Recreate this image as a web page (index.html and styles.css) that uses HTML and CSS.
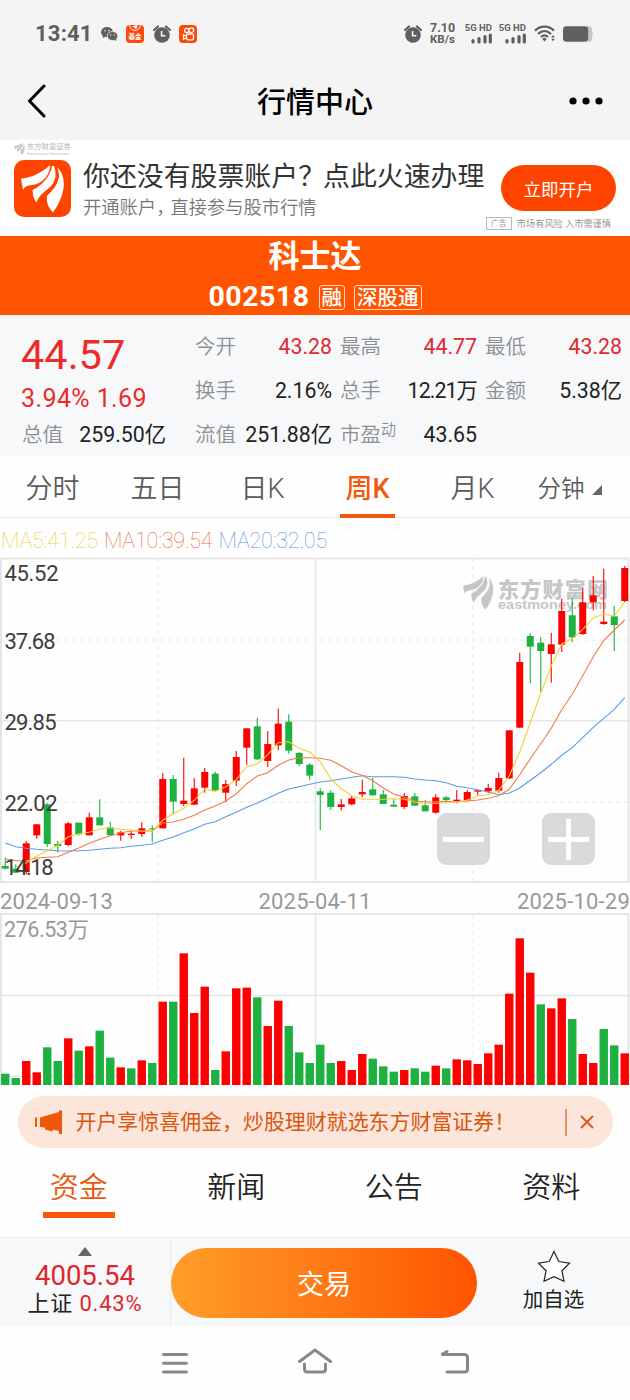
FILE: index.html
```
<!DOCTYPE html>
<html lang="zh-CN">
<head>
  <meta charset="UTF-8">
  <title>行情中心</title>
  <link rel="stylesheet" href="styles.css">
</head>
<body>

  <svg class="defs">
    <symbol id="logo" viewBox="0 0 44 48">
      <path d="M0 13.500C8 13 20 9 29 0C29.500 9 22 19 11 20C6 20.500 3 22 2 25Z"/>
      <path d="M31 1C30 10 22 20 11.500 25C12 31 13 35 15.500 37.500C17 32 22 28 28 23C35 17 36 9 33 1Z"/>
      <path d="M36 2C43 9 44 18 42 26C40 35 36 42 32 47.500C28 43 25 38 26 31C30 27 37 20 38 12C38 8 37.500 5 36 2Z"/>
    </symbol>
    <symbol id="alarm" viewBox="0 0 18 18">
      <circle cx="9" cy="10" r="7.8"/>
      <path d="M1 5L5 1.5M17 5L13 1.5" stroke="#5f5f5f" stroke-width="2.2" stroke-linecap="round"/>
      <path d="M8.6 6V10.8H12.4" fill="none" stroke="#f4f4f4" stroke-width="1.6"/>
    </symbol>
    <symbol id="signal" viewBox="0 0 21 11">
      <path d="M2 7.6V9M8 5.5V9M14 3.5V9M19.3 2V9" stroke="#5f5f5f" stroke-width="3.2" stroke-linecap="round"/>
    </symbol>
  </svg>

  <div class="status-bar">
    <div class="status-left">
      <span class="clock">13:41</span>
      <svg class="wechat" viewBox="0 0 17 14">
        <ellipse cx="6" cy="5.2" rx="6" ry="5.1"/>
        <path d="M2 8L1.6 11L5 9.6Z"/>
        <ellipse cx="11.5" cy="9" rx="5.3" ry="4.5" stroke="#f4f4f4" stroke-width=".8"/>
        <path d="M13 12.8L15.2 14L15 11.6Z"/>
        <g fill="#f4f4f4"><circle cx="4" cy="3.8" r=".8"/><circle cx="8" cy="3.8" r=".8"/><circle cx="9.8" cy="8" r=".7"/><circle cx="13.2" cy="8" r=".7"/></g>
      </svg>
      <span class="app-icon fund">
        <svg viewBox="0 0 12 6"><path d="M.6 0A5.4 5.4 0 0 0 11.4 0" fill="none" stroke="#fff" stroke-width=".9"/><path d="M3 1.6L8 0L8.5 1L7 4.5L5.5 2.5Z" fill="#fff"/></svg>
        <i>基金</i>
      </span>
      <svg class="alarm"><use href="#alarm"/></svg>
      <span class="app-icon kuai">
        <svg viewBox="0 0 12 14" fill="none" stroke="#fff" stroke-width="1.3">
          <circle cx="4.2" cy="3.5" r="2.1"/><circle cx="8.8" cy="3.2" r="2.4"/>
          <rect x="4" y="7" width="7" height="5.8" rx="1.6"/><path d="M3.8 9L1 7.8V12L3.8 10.8"/>
        </svg>
      </span>
    </div>
    <div class="status-right">
      <svg class="alarm"><use href="#alarm"/></svg>
      <div class="speed"><b>7.10</b><b>KB/s</b></div>
      <div class="sim"><b>5G HD</b><svg><use href="#signal"/></svg></div>
      <div class="sim"><b>5G HD</b><svg><use href="#signal"/></svg></div>
      <svg class="wifi" viewBox="0 0 22 17">
        <g fill="none" stroke="#5f5f5f" stroke-width="2.3">
          <path d="M1 5.6C6.5 .3 14.500 .3 20 5.600"/><path d="M4 9C8 5.200 13 5.200 17 9"/><path d="M7 12C9.200 10 11.800 10 14 12"/>
        </g>
        <path d="M8.300 14L10.500 16.500L12.700 14A3 3 0 0 0 8.300 14Z"/>
        <path d="M17.200 12.500L19 10L20.800 12.500ZM17.200 13.700L19 16.200L20.800 13.700Z"/>
      </svg>
      <svg class="battery" viewBox="0 0 32 16">
        <path d="M24 0H27Q30 0 30 4V12Q30 16 27 16H24Z" fill="#c4c4c4"/>
        <path d="M30 5Q31.500 8 30 11Z" fill="#c4c4c4"/>
        <rect width="26" height="16" rx="3.500"/>
      </svg>
    </div>
  </div>

  <div class="nav-bar">
    <svg class="back" viewBox="0 0 20 34"><path d="M17 2L2.500 17L17 32" fill="none" stroke="#000" stroke-width="3" stroke-linecap="round" stroke-linejoin="round"/></svg>
    <h1>行情中心</h1>
    <svg class="more" viewBox="0 0 34 8"><circle cx="4" cy="4" r="3.600"/><circle cx="17" cy="4" r="3.600"/><circle cx="30" cy="4" r="3.600"/></svg>
  </div>

  <div class="ad">
    <div class="ad-brand">
      <svg><use href="#logo"/></svg>
      <div><span class="brand-cn">东方财富证券</span><span class="brand-en">Eastmoney Securities</span></div>
    </div>
    <div class="ad-body">
      <div class="ad-logo"><svg><use href="#logo"/></svg></div>
      <div class="ad-text">
        <h2>你还没有股票账户<span class="mark">？</span>点此火速办理</h2>
        <p>开通账户<span class="comma">，</span>直接参与股市行情</p>
      </div>
      <div class="ad-side">
        <button class="open-btn">立即开户</button>
        <div class="ad-note"><span class="ad-tag">广告</span>市场有风险 入市需谨慎</div>
      </div>
    </div>
  </div>

  <div class="stock-head">
    <h2>科士达</h2>
    <div class="stock-code"><span class="code">002518</span><span class="tag">融</span><span class="tag">深股通</span></div>
  </div>

  <div class="quote">
    <div class="price-box">
      <div class="price">44.57</div>
      <div class="change">3.94% 1.69</div>
    </div>
    <div class="item"><span>今开</span><b class="up">43.28</b></div>
    <div class="item"><span>最高</span><b class="up">44.77</b></div>
    <div class="item"><span>最低</span><b class="up">43.28</b></div>
    <div class="item"><span>换手</span><b>2.16%</b></div>
    <div class="item"><span>总手</span><b class="tight">12.21万</b></div>
    <div class="item"><span>金额</span><b>5.38亿</b></div>
    <div class="item"><span>总值</span><b>259.50亿</b></div>
    <div class="item"><span>流值</span><b>251.88亿</b></div>
    <div class="item"><span>市盈<sup>动</sup></span><b>43.65</b></div>
  </div>

  <div class="k-tabs">
    <div class="k-tab">分时</div>
    <div class="k-tab">五日</div>
    <div class="k-tab">日K</div>
    <div class="k-tab active">周K</div>
    <div class="k-tab">月K</div>
    <div class="k-tab minute">分钟<i class="corner"></i></div>
  </div>

  <div class="ma-row">
    <span class="ma5">MA5:41.25</span>
    <span class="ma10">MA10:39.54</span>
    <span class="ma20">MA20:32.05</span>
  </div>

  <div class="chart">
    <svg id="kline" width="630" height="330">
      <g class="grid">
        <path class="dash" d="M0 84H630M0 246H630M158 2V326M473 2V326"/>
        <path class="solid" d="M0 164.700H630M315.500 2V326"/>
        <rect x="1" y="2.500" width="627.500" height="323.500"/>
      </g>
      <g class="watermark">
        <use href="#logo" x="463" y="20" width="31" height="34"/>
        <text class="wm-cn" x="498" y="40.500" textLength="110">东方财富网</text>
        <text class="wm-en" x="498" y="53" textLength="109" lengthAdjust="spacingAndGlyphs">eastmoney.com</text>
      </g>
    </svg>
    <div class="zoom-btns">
      <button class="zoom minus"></button>
      <button class="zoom plus"></button>
    </div>
  </div>

  <div class="dates"><span>2024-09-13</span><span>2025-04-11</span><span>2025-10-29</span></div>

  <svg id="volume" width="630" height="172">
    <g class="grid">
      <path class="dash" d="M158 2V172M473 2V172"/>
      <path class="solid" d="M0 82.500H630M0 163.300H630M315.500 2V172"/>
      <path class="frame" d="M1 172V1H628.500V172"/>
    </g>
    <text class="vol-label" x="4" y="24" textLength="85">276.53万</text>
  </svg>

  <div class="notice">
    <svg class="horn" viewBox="0 0 27 24"><path d="M0 7.500H2V17H0ZM5 7.500L24 2V.500H27V24H24V21L18 19.500L17 21.500L10 19.500V17.500L5 17Z"/></svg>
    <span class="notice-text">开户享惊喜佣金，炒股理财就选东方财富证券！</span>
    <i class="bar"></i>
    <svg class="close" viewBox="0 0 14 14"><path d="M1 1L13 13M13 1L1 13" stroke="#e0591b" stroke-width="2"/></svg>
  </div>

  <div class="info-tabs">
    <div class="info-tab active">资金</div>
    <div class="info-tab">新闻</div>
    <div class="info-tab">公告</div>
    <div class="info-tab">资料</div>
  </div>

  <div class="bottom-bar">
    <div class="index-box">
      <i class="arrow-up"></i>
      <div class="index-value">4005.54</div>
      <div class="index-name">上证 <span>0.43%</span></div>
    </div>
    <button class="trade-btn">交易</button>
    <div class="fav">
      <svg viewBox="0 0 34 33"><path d="M17 1.500L21.800 11.500L32.500 13.200L24.900 20.700L27 31.300L17 26.600L7 31.300L9.100 20.700L1.500 13.200L12.200 11.500Z" fill="#fff" stroke="#222" stroke-width="1.200"/></svg>
      <span>加自选</span>
    </div>
  </div>

  <div class="sys-nav">
    <svg viewBox="0 0 34 28"><path d="M5.500 6.500H28.500M5.500 15.300H28.500M5.500 24H28.500"/></svg>
    <svg viewBox="0 0 34 28"><path d="M1.500 13.500L17 2L32.500 13.500M6.500 16V21Q6.500 24 9.500 24H24.500Q27.500 24 27.500 21V16"/></svg>
    <svg viewBox="0 0 34 28"><path d="M9 3.500L3.500 6.500H26.500Q29.500 6.500 29.500 9.500V21Q29.500 24 26.500 24H9"/></svg>
  </div>

  <script src="chart.js"></script>
</body>
</html>
```

FILE: styles.css
```
* {
  box-sizing: border-box;
}

body {
  margin: 0;
  width: 630px;
  height: 1400px;
  overflow: hidden;
  background: #fefefe;
  font-family: Roboto, "Noto Sans CJK SC", sans-serif;
  color: #222;
}

h1, h2, p {
  margin: 0;
}

button {
  border: none;
  padding: 0;
  font-family: inherit;
}

svg {
  display: block;
}

i {
  font-style: normal;
}

.defs {
  width: 0;
  height: 0;
  position: absolute;
}

/* status bar */
.status-bar {
  height: 67px;
  padding: 0 36px 0 35px;
  background: #f4f4f4;
  display: flex;
  justify-content: space-between;
  align-items: center;
  fill: #5f5f5f;
  color: #5f5f5f;
}

.status-left, .status-right {
  display: flex;
  align-items: center;
}

.clock {
  font-size: 22px;
  font-weight: 700;
  letter-spacing: 0.2px;
  width: 66px;
  line-height: 24px;
}

.wechat {
  width: 17px;
  height: 14px;
}

.app-icon {
  width: 18px;
  height: 18px;
  border-radius: 4px;
  background: #fb4a0b;
  display: flex;
  flex-direction: column;
  align-items: center;
  justify-content: center;
}

.fund {
  margin: 0 9px 0 8px;
  justify-content: flex-start;
}

.fund svg {
  width: 12px;
  height: 6px;
}

.fund i {
  font-size: 6.5px;
  line-height: 12px;
  font-weight: 700;
  color: #fff;
}

.kuai {
  margin-left: 8px;
}

.kuai svg {
  width: 13px;
  height: 14px;
}

.alarm {
  width: 18px;
  height: 18px;
}

.speed {
  margin: 0 9px 0 8px;
  width: 25px;
  display: flex;
  flex-direction: column;
  font-size: 11.5px;
  line-height: 12px;
}

.speed b:first-child {
  font-size: 12.5px;
  line-height: 11px;
}

.sim {
  width: 28px;
  margin-right: 6px;
  display: flex;
  flex-direction: column;
  align-items: flex-end;
  font-size: 9.5px;
  line-height: 10px;
  white-space: nowrap;
}

.sim svg {
  width: 21px;
  height: 11px;
}

.wifi {
  width: 22px;
  height: 17px;
  margin: 0 7px 0 2px;
}

.battery {
  width: 31px;
  height: 16px;
}

/* title bar */
.nav-bar {
  height: 73px;
  padding: 0 27px 5px;
  background: #f4f4f4;
  display: flex;
  justify-content: space-between;
  align-items: center;
}

.back {
  width: 20px;
  height: 34px;
}

.nav-bar h1 {
  font-size: 29px;
  line-height: 40px;
  font-weight: 500;
  color: #000;
  padding: 3px 0 0 14px;
}

.more {
  width: 34px;
  height: 8px;
}

/* ad banner */
.ad {
  height: 96px;
  background: #fff;
  padding: 3px 14px 0;
}

.ad-brand {
  display: flex;
  height: 13px;
  gap: 2px;
  color: #c4c4c4;
  fill: #c4c4c4;
}

.ad-brand svg {
  width: 11px;
  height: 12px;
}

.ad-brand span {
  display: block;
  white-space: nowrap;
}

.brand-cn {
  font-size: 7.3px;
  line-height: 8px;
  font-weight: 500;
}

.brand-en {
  font-size: 4.4px;
  line-height: 5px;
}

.ad-body {
  display: flex;
}

.ad-logo {
  width: 57px;
  height: 57px;
  margin-top: 4px;
  border-radius: 10px;
  background: #ff4400;
  display: flex;
  align-items: center;
  justify-content: center;
  fill: #fff;
}

.ad-logo svg {
  width: 44px;
  height: 48px;
}

.ad-text {
  margin-left: 12px;
  width: 403px;
}

.ad-text h2 {
  font-size: 26.9px;
  line-height: 38px;
  font-weight: 400;
  color: #333;
  white-space: nowrap;
  margin-top: 2px;
}

.mark {
  letter-spacing: -2px;
}

.ad-text p {
  font-size: 18.3px;
  line-height: 23px;
  color: #777;
  font-weight: 350;
}

.comma {
  letter-spacing: -4px;
}

.ad-side {
  margin-left: -1px;
  padding-top: 9px;
  display: flex;
  flex-direction: column;
  align-items: flex-end;
  width: 131px;
}

.open-btn {
  width: 115px;
  height: 46px;
  border-radius: 23px;
  background: #ff4400;
  color: #fff;
  font-size: 17.5px;
}

.ad-note {
  display: flex;
  align-items: center;
  margin: 5px 5px 0 0;
  font-size: 9.2px;
  line-height: 15px;
  color: #999;
  white-space: nowrap;
}

.ad-tag {
  width: 26px;
  height: 13px;
  margin-right: 5px;
  border: 1px solid #bbb;
  font-size: 8px;
  line-height: 12px;
  text-align: center;
}

/* stock name */
.stock-head {
  height: 79px;
  background: #ff5500;
  color: #fff;
  text-align: center;
}

.stock-head h2 {
  font-size: 31px;
  line-height: 42px;
  font-weight: 700;
}

.stock-code {
  display: flex;
  justify-content: center;
  align-items: center;
  height: 38px;
  gap: 9px;
}

.code {
  font-size: 28.5px;
  line-height: 40px;
  font-weight: 700;
  letter-spacing: 0.5px;
}

.tag {
  height: 25px;
  padding: 0 2px;
  border: 1px solid #ffd9c4;
  border-radius: 3px;
  font-size: 20.5px;
  line-height: 25px;
  font-weight: 500;
}

/* quote grid */
.quote {
  height: 141px;
  padding: 10px 8px 0 22px;
  background: #f6f8fa;
  display: grid;
  grid-template-columns: 165px 137px 137px 137px;
  grid-template-rows: 44px 43px 45px;
  column-gap: 8px;
}

.price-box {
  grid-row: span 2;
  color: #ee2a2a;
}

.price {
  font-size: 41.5px;
  line-height: 59px;
  height: 59px;
  margin-left: -1px;
}

.change {
  font-size: 25px;
  line-height: 29px;
  letter-spacing: 0.4px;
  margin-left: -1px;
  white-space: nowrap;
}

.item {
  display: flex;
  justify-content: space-between;
  align-items: center;
  white-space: nowrap;
  font-size: 20.5px;
  line-height: 30px;
}

.item:nth-child(8) {
  width: 144px;
}

.item span {
  color: #8d8f94;
  font-weight: 350;
}

.item b {
  font-size: 21.3px;
  font-weight: 400;
}

.item b.up {
  color: #e02a30;
}

.item b.tight {
  letter-spacing: -0.9px;
}

.item sup {
  font-size: 15px;
  line-height: 0;
  vertical-align: 7px;
}

/* period tabs */
.k-tabs {
  height: 62px;
  background: #fefefe;
  border-bottom: 1px solid #ececec;
  display: flex;
}

.k-tab {
  width: 105px;
  height: 62px;
  font-size: 27px;
  line-height: 66px;
  font-weight: 350;
  color: #5a5a5a;
  display: flex;
  justify-content: center;
}

.k-tab.active {
  color: #f2590d;
  font-weight: 500;
}

.k-tab.active::after {
  content: "";
  position: absolute;
  width: 55px;
  height: 4px;
  margin-top: 58px;
  background: #f2590d;
}

.k-tab.minute {
  font-size: 23.5px;
  padding-right: 16px;
}

.corner {
  width: 0;
  height: 0;
  margin: 29px 0 0 7px;
  border-left: 10px solid transparent;
  border-bottom: 10px solid #666;
}

/* moving averages */
.ma-row {
  height: 38px;
  display: flex;
  gap: 6px;
  padding: 7px 0 0 1px;
  font-size: 21.5px;
  line-height: 32px;
  font-weight: 100;
  letter-spacing: -0.2px;
}

.ma5 {
  color: #e8cf2e;
}

.ma10 {
  color: #ea6b3c;
}

.ma20 {
  color: #5b94d6;
}

/* charts */
.chart {
  height: 330px;
  position: relative;
}

.grid path, .grid rect {
  fill: none;
  stroke: #e6e6e6;
  stroke-width: 1.5;
}

.grid rect, .grid .frame {
  stroke-width: 2;
}

.grid .dash {
  stroke-width: 1;
  stroke-dasharray: 4 4;
}

.watermark {
  fill: #c6c6c6;
}

.wm-cn {
  font-size: 21px;
  font-weight: 900;
}

.wm-en {
  font-family: "Liberation Sans", sans-serif;
  font-size: 12px;
  font-weight: 700;
}

.axis {
  font-size: 22px;
  fill: #3c3c3c;
}

.vol-label {
  font-size: 21.5px;
  fill: #999;
}

.line {
  fill: none;
  stroke-width: 1.1;
}

.zoom-btns {
  position: absolute;
  left: 437px;
  top: 257px;
  display: flex;
  gap: 52px;
}

.zoom {
  width: 53px;
  height: 52px;
  border-radius: 9px;
  background: linear-gradient(#fff, #fff) center / 41px 5px no-repeat rgba(205, 205, 205, 0.75);
}

.plus {
  background: linear-gradient(#fff, #fff) center / 41px 5px no-repeat,
    linear-gradient(#fff, #fff) center / 5px 41px no-repeat rgba(205, 205, 205, 0.75);
}

.dates {
  height: 27px;
  display: flex;
  justify-content: space-between;
  font-size: 22px;
  line-height: 32px;
  letter-spacing: 0.2px;
  color: #999;
}

/* notice */
.notice {
  margin: 11px 0 0 17.5px;
  width: 595px;
  height: 52px;
  padding: 0 17px;
  border-radius: 26px;
  background: #fce5da;
  display: flex;
  align-items: center;
}

.horn {
  width: 27px;
  height: 24px;
  fill: #ee560a;
}

.notice-text {
  flex: 1;
  margin-left: 14px;
  font-size: 20.95px;
  line-height: 50px;
  color: #d8570f;
  white-space: nowrap;
}

.bar {
  width: 1.5px;
  height: 27px;
  background: #e39468;
}

.close {
  width: 14px;
  height: 14px;
  margin: 0 2px 0 13px;
}

/* info tabs */
.info-tabs {
  height: 89px;
  display: flex;
}

.info-tab {
  width: 157.5px;
  height: 70px;
  text-align: center;
  font-size: 29px;
  line-height: 81px;
  font-weight: 350;
}

.info-tab.active {
  color: #e8590f;
  background: linear-gradient(#fb560a, #fb560a) center bottom / 72px 6px no-repeat;
}

/* bottom bar */
.bottom-bar {
  height: 89px;
  background: #f6f8fa;
  border-top: 1px solid #f0f0f0;
  display: flex;
  align-items: center;
}

.index-box {
  width: 171px;
  height: 88px;
  border-right: 1px solid #ebebed;
  display: flex;
  flex-direction: column;
  align-items: center;
}

.arrow-up {
  margin-top: 9px;
  border: 7px solid transparent;
  border-top: 0;
  border-bottom: 9px solid #666;
}

.index-value {
  font-size: 27.5px;
  line-height: 31px;
  margin-top: 4px;
  color: #e0262d;
}

.index-name {
  font-size: 22px;
  line-height: 26px;
  letter-spacing: 0.8px;
}

.index-name span {
  color: #e0262d;
}

.trade-btn {
  width: 306px;
  height: 70px;
  margin-top: 1px;
  border-radius: 35px;
  background: linear-gradient(90deg, #ff9e2a, #ff5400);
  color: #fff;
  font-size: 27px;
}

.fav {
  flex: 1;
  display: flex;
  flex-direction: column;
  align-items: center;
  padding-top: 3px;
}

.fav svg {
  width: 34px;
  height: 33px;
}

.fav span {
  font-size: 20.5px;
  line-height: 35px;
}

/* system keys */
.sys-nav {
  height: 74px;
  padding: 22px 158px 0;
  display: flex;
  justify-content: space-between;
}

.sys-nav svg {
  width: 34px;
  height: 28px;
  fill: none;
  stroke: #888;
  stroke-width: 3;
  stroke-linecap: round;
}
```

FILE: chart.js
```
const RED = "#fd0000";
const GREEN = "#1db13f";
const STEP = 10.5;
const SCALE = 3;

// type, high, body top, body bottom, low, volume top
const bars = [
  ["g", 905, 930, 938, 940, 566], ["g", 925, 938, 950, 950, 579], ["r", 855, 862, 948, 955, 528],
  ["r", 805, 805, 838, 848, 562], ["g", 740, 745, 864, 873, 487], ["g", 855, 864, 870, 890, 528],
  ["r", 797, 802, 867, 871, 460], ["g", 800, 800, 835, 838, 497], ["r", 770, 784, 838, 838, 484],
  ["g", 730, 784, 808, 808, 437], ["g", 797, 814, 838, 838, 518], ["r", 824, 829, 838, 854, 547],
  ["r", 824, 833, 837, 849, 550, "g"], ["r", 799, 817, 834, 842, 526], ["g", 808, 817, 820, 859, 534],
  ["r", 651, 669, 817, 817, 350], ["g", 657, 669, 737, 775, 350], ["r", 605, 734, 744, 750, 205],
  ["r", 667, 697, 746, 746, 384], ["r", 636, 648, 695, 710, 305], ["g", 647, 653, 704, 704, 555],
  ["r", 672, 684, 710, 737, 499], ["r", 585, 603, 674, 690, 310], ["r", 517, 517, 575, 626, 308],
  ["g", 485, 511, 610, 612, 337], ["r", 525, 564, 615, 633, 423], ["r", 458, 503, 568, 583, 347],
  ["g", 475, 497, 584, 593, 423], ["g", 588, 591, 624, 631, 502], ["g", 622, 626, 659, 673, 534],
  ["g", 697, 706, 717, 822, 479], ["g", 702, 710, 753, 761, 534], ["r", 729, 745, 753, 763, 528],
  ["r", 721, 727, 745, 748, 555], ["r", 671, 708, 715, 724, 507], ["g", 665, 700, 718, 718, 521],
  ["g", 702, 715, 744, 744, 544], ["g", 730, 746, 752, 752, 560], ["r", 711, 720, 753, 759, 555],
  ["g", 711, 721, 749, 749, 550], ["g", 732, 748, 766, 766, 560], ["r", 715, 724, 770, 773, 542],
  ["g", 720, 724, 732, 737, 550], ["r", 703, 731, 735, 742, 523], ["r", 702, 708, 733, 735, 526],
  ["r", 702, 703, 707, 718, 537], ["r", 683, 696, 706, 712, 505], ["r", 650, 666, 704, 710, 479],
  ["r", 523, 523, 667, 669, 326], ["r", 290, 318, 515, 517, 160], ["g", 232, 240, 272, 382, 263, "r"],
  ["g", 243, 260, 285, 408, 358], ["r", 230, 265, 294, 380, 370], ["r", 128, 165, 266, 288, 340],
  ["g", 127, 178, 244, 259, 402], ["r", 94, 139, 234, 237, 507], ["r", 60, 118, 139, 163, 534],
  ["r", 38, 197, 204, 206, 432, "g"], ["g", 150, 181, 207, 285, 481], ["r", 30, 36, 135, 138, 505]
];

const ma5 = [null, 935, 920, 900, 884, 868, 842, 833, 829, 819, 815, 820, 822, 826, 826, 793, 773, 757, 733, 699,
  706, 692, 671, 632, 624, 596, 560, 557, 577, 588, 617, 668, 698, 719, 730, 730, 730, 728, 729, 739,
  742, 742, 740, 739, 732, 720, 716, 703, 660, 588, 500, 412, 330, 264, 248, 220, 186, 174, 180, 138];
const ma10 = [908, 914, 914, 906, 904, 902, 889, 876, 862, 850, 839, 830, 825, 825, 824, 801, 798, 790, 778, 762,
  750, 735, 713, 683, 660, 650, 628, 612, 605, 605, 607, 613, 629, 648, 658, 674, 696, 714, 724, 734,
  738, 737, 736, 738, 735, 732, 727, 719, 700, 656, 608, 563, 517, 461, 415, 359, 302, 254, 222, 192];
const ma20 = [861, 872, 877, 880, 882, 884, 885, 884, 883, 880, 877, 875, 871, 868, 864, 853, 843, 830, 819, 805,
  797, 782, 769, 754, 741, 727, 712, 699, 692, 685, 678, 674, 669, 664, 659, 662, 662, 662, 664, 669,
  672, 674, 680, 691, 695, 701, 708, 716, 711, 696, 673, 650, 625, 598, 575, 545, 514, 487, 460, 425];

const kline = document.getElementById("kline");
const volume = document.getElementById("volume");

function add(parent, tag, attrs, text) {
  const el = document.createElementNS("http://www.w3.org/2000/svg", tag);
  for (const key in attrs) el.setAttribute(key, attrs[key]);
  if (text) el.textContent = text;
  parent.appendChild(el);
}

bars.forEach(function (b, i) {
  const x = 5.25 + i * STEP;
  const color = b[0] === "r" ? RED : GREEN;
  const volColor = (b[6] || b[0]) === "r" ? RED : GREEN;
  add(kline, "line", { x1: x, x2: x, y1: b[1] / SCALE, y2: b[4] / SCALE, stroke: color, "stroke-width": 1.1 });
  add(kline, "rect", { x: x - 3.5, y: b[2] / SCALE, width: 7, height: Math.max((b[3] - b[2]) / SCALE, 1), fill: color });
  const top = b[5] / SCALE - 28;
  add(volume, "rect", { x: x - 4.2, y: top, width: 8.4, height: 172 - top, fill: volColor });
});

function drawLine(data, color) {
  const points = [];
  data.forEach(function (v, i) {
    if (v !== null) points.push((5.25 + i * STEP) + "," + (v / SCALE).toFixed(1));
  });
  add(kline, "polyline", { class: "line", points: points.join(" "), stroke: color });
}

drawLine(ma20, "#5b9be8");
drawLine(ma10, "#f47a48");
drawLine(ma5, "#f5cf35");

[["45.52", 24.7, 54], ["37.68", 93, 51], ["29.85", 174, 52], ["22.02", 255, 53], ["14.18", 319, 49]].forEach(function (l) {
  add(kline, "text", { class: "axis", x: 4.5, y: l[1], textLength: l[2] }, l[0]);
});
```
